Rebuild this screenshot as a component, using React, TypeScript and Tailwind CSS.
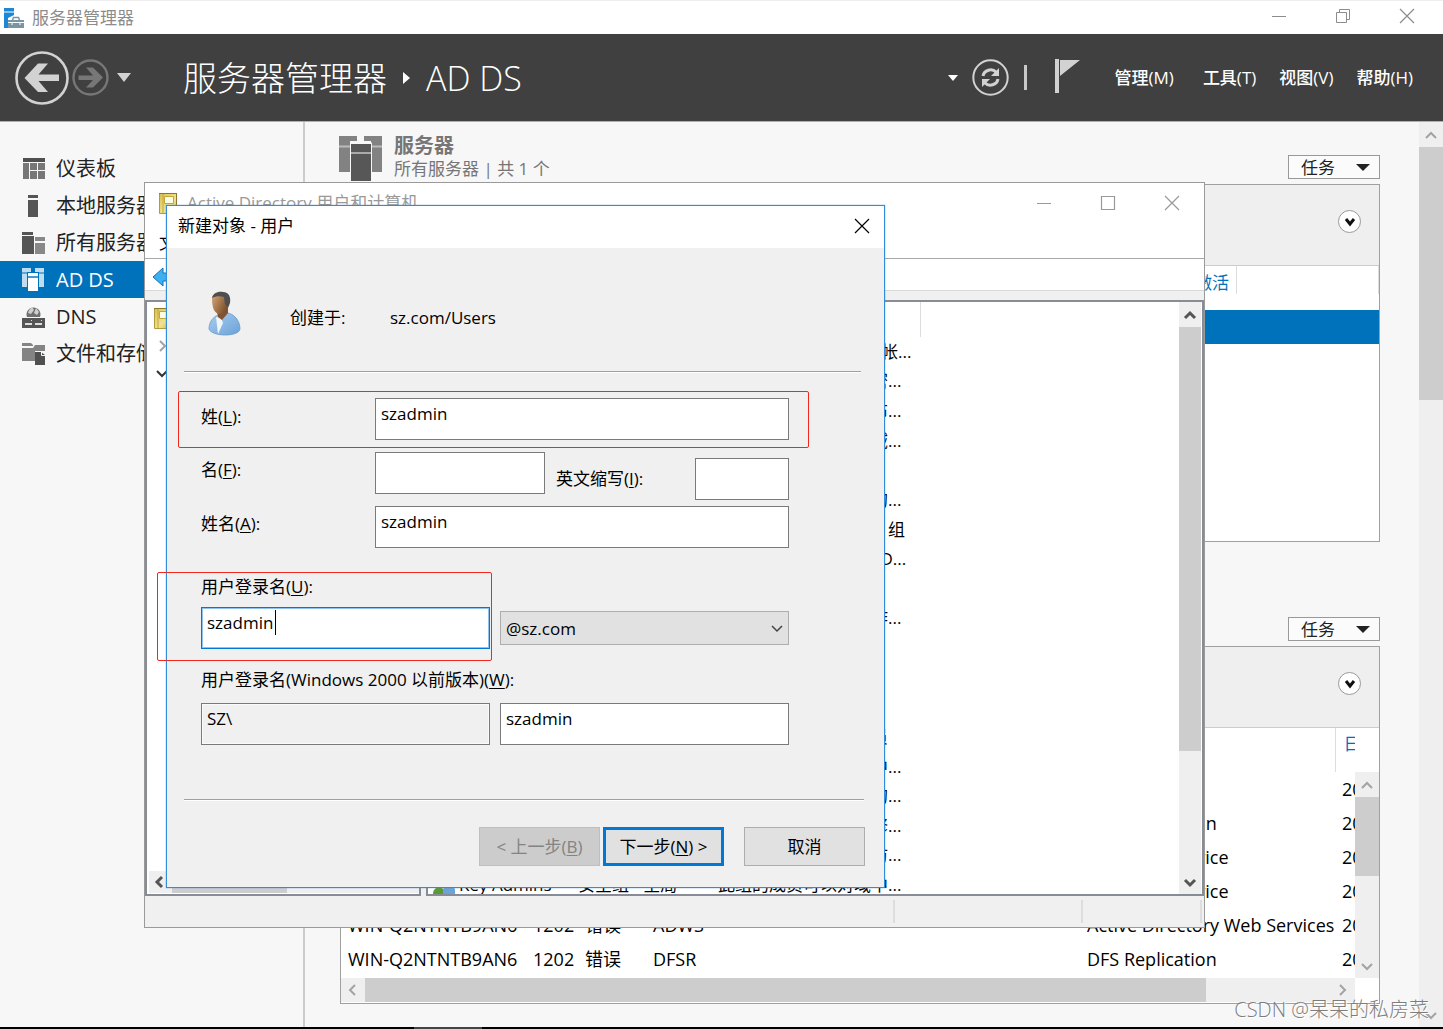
import React from "react";

const events = [
  { server: "", id: "", level: "", log: "", source: "" },
  { server: "", id: "", level: "", log: "", source: "DFS Replication" },
  { server: "", id: "", level: "", log: "", source: "Directory Service" },
  { server: "", id: "", level: "", log: "", source: "Directory Service" },
  { server: "WIN-Q2NTNTB9AN6", id: "1202", level: "错误", log: "ADWS", source: "Active Directory Web Services" },
  { server: "WIN-Q2NTNTB9AN6", id: "1202", level: "错误", log: "DFSR", source: "DFS Replication" },
];

const objects: [string, string, string][] = [
  ["", "", "管理计算机(域)的内置帐..."],
  ["", "", "允许将此组中成员的密..."],
  ["", "", "此组的成员被允许发布..."],
  ["", "", "可以克隆此组中作为域..."],
  ["", "", ""],
  ["", "", "不允许将此组中成员的..."],
  ["", "", "DNS Administrators \u00a0\u00a0组"],
  ["", "", "允许替其他客户端(如 D..."],
  ["", "", ""],
  ["", "", "加入到域中的所有工作..."],
  ["", "", ""],
  ["", "", ""],
  ["", "", ""],
  ["", "", "企业的指定系统管理员"],
  ["", "", "此组的成员可以对林中..."],
  ["", "", "该组的成员是企业中的..."],
  ["", "", "这个组中的成员可以修..."],
  ["", "", "供来宾访问计算机或访..."],
  ["Key Admins", "安全组 - 全局", "此组的成员可以对域中..."],
];

type Dir = "up" | "down" | "left" | "right";
const chevronPath: Record<Dir, string> = {
  up: "M2 9 L7 4 L12 9",
  down: "M2 5 L7 10 L12 5",
  left: "M9 2 L4 7 L9 12",
  right: "M5 2 L10 7 L5 12",
};

function Chevron({ dir, color = "#a3a3a3", width = 2 }: { dir: Dir; color?: string; width?: number }) {
  return (
    <svg width="14" height="14" viewBox="0 0 14 14" fill="none" aria-hidden="true">
      <path d={chevronPath[dir]} stroke={color} strokeWidth={width} />
    </svg>
  );
}

function Triangle({ className, w, h }: { className: string; w: number; h: number }) {
  return (
    <svg className={className} width={w} height={h} viewBox="0 0 10 5" preserveAspectRatio="none" aria-hidden="true">
      <path d="M0 0H10L5 5Z" fill="currentColor" />
    </svg>
  );
}

function CloseIcon() {
  return (
    <svg width="16" height="16" viewBox="0 0 16 16" fill="none" stroke="currentColor" strokeWidth="1.2" aria-hidden="true">
      <path d="M1 1L15 15M15 1L1 15" />
    </svg>
  );
}

function MinIcon() {
  return (
    <svg width="16" height="16" viewBox="0 0 16 16" stroke="currentColor" aria-hidden="true">
      <path d="M1 8.5H15" />
    </svg>
  );
}

function ServerManagerIcon() {
  return (
    <svg width="20" height="20" viewBox="0 0 20 20" aria-hidden="true">
      <path d="M0 0H10V3.500H0Z M0 4.500H10V7L4 10V20H0Z" fill="#1b87d6" />
      <path d="M4 12H20V20H4Z" fill="#7895a8" />
      <path d="M8.500 12L9.500 9.500H14.500L15.500 12" fill="none" stroke="#7895a8" strokeWidth="1.5" />
      <path d="M4 14.500H20M8 14V17M16 14V17" stroke="#fff" fill="none" />
    </svg>
  );
}

function DashboardIcon() {
  return (
    <svg width="24" height="24" viewBox="0 0 24 24" aria-hidden="true">
      <path d="M1 1H23V5H1Z" fill="#505050" />
      <path d="M1 6H7V22H1Z M8 6H15V13H8Z M16 6H23V13H16Z M8 14H15V22H8Z M16 14H23V22H16Z" fill="#777" />
    </svg>
  );
}

function LocalIcon() {
  return (
    <svg width="24" height="24" viewBox="0 0 24 24" aria-hidden="true">
      <path d="M6 1H16V4H6Z M6 6H16V23H6Z" fill="#555" />
    </svg>
  );
}

function AllServersIcon() {
  return (
    <svg width="24" height="24" viewBox="0 0 24 24" aria-hidden="true">
      <path d="M0 1H11V4H0Z M0 5H12V23H0Z" fill="#555" />
      <path d="M13 6H23V10H13Z M13 12H23V23H13Z" fill="#888" />
    </svg>
  );
}

function AdIcon() {
  return (
    <svg width="24" height="24" viewBox="0 0 24 24" aria-hidden="true">
      <path d="M0 0H9V4H5V19H0Z M13 0H22V19H17V4H13Z" fill="#bfdcf0" />
      <path d="M0 5H5M17 5H22" stroke="#0072bc" />
      <path d="M6 5H16V8H6Z M6 10H16V23H6Z" fill="#fff" />
      <path d="M6 9H16" stroke="#8cc0e4" />
    </svg>
  );
}

function DnsIcon() {
  return (
    <svg width="24" height="24" viewBox="0 0 24 24" aria-hidden="true">
      <path d="M5 12A7 7 0 1 1 18 12Z" fill="#707070" />
      <path d="M7 5L10 2L12 5L9 9L6 8ZM14 3L17 7L15 10L12 8Z" fill="#cfcfcf" />
      <path d="M0 13H23V23H0Z" fill="#555" />
      <path d="M3 19H10M13 19H20" stroke="#ddd" strokeWidth="2" />
      <path d="M9 15.500H10M19 15.500H20" stroke="#ddd" />
    </svg>
  );
}

function FilesIcon() {
  return (
    <svg width="24" height="24" viewBox="0 0 24 24" aria-hidden="true">
      <path d="M0 1H9L11 3V4H0Z M0 6H11L13 3H23V9H13V19H0Z" fill="#848484" />
      <path d="M13 10H19L23 13V23H13Z" fill="#505050" />
      <path d="M19.500 10V13.500H23" stroke="#f7f7f7" fill="none" />
    </svg>
  );
}

function ServersIcon() {
  return (
    <svg width="44" height="48" viewBox="0 0 44 48" aria-hidden="true">
      <path d="M0 2H18V7H11V38H0Z M25 2H43V38H32V7H25Z" fill="#828282" />
      <path d="M0 12.500H11M32 12.500H43" stroke="#bbb" strokeWidth="2" />
      <path d="M12 10H32V47H12Z" fill="#575757" />
      <path d="M11 9H33M11.500 9V47M32.500 9V47" stroke="#f7f7f7" />
      <path d="M12 19H32" stroke="#aaa" strokeWidth="2" />
    </svg>
  );
}

function BookIcon() {
  return (
    <svg width="18" height="21" viewBox="0 0 18 21" aria-hidden="true">
      <defs>
        <linearGradient id="cover" x1="0" y1="0" x2="1" y2="1">
          <stop offset="0" stopColor="#d9c04c" />
          <stop offset="0.6" stopColor="#f1e292" />
          <stop offset="1" stopColor="#d0b540" />
        </linearGradient>
      </defs>
      <path d="M0.500 0.500H17.500V20.500H0.500Z" fill="url(#cover)" stroke="#b49a3c" />
      <path d="M0 0.500H18M17.500 0V21" stroke="#8d762a" />
      <path d="M4 1V20" stroke="#c2a740" />
      <path d="M5.500 3.500H14.500V10.500H5.500Z" fill="#fffce4" stroke="#c2a740" />
    </svg>
  );
}

function UserIcon() {
  return (
    <svg width="34" height="46" viewBox="0 0 34 46" aria-hidden="true">
      <defs>
        <linearGradient id="shirt" x1="0" y1="0" x2="1" y2="1">
          <stop offset="0" stopColor="#a9cdf0" />
          <stop offset="1" stopColor="#6aa2d8" />
        </linearGradient>
        <linearGradient id="skin" x1="0" y1="0" x2="1" y2="0.6">
          <stop offset="0" stopColor="#d8a878" />
          <stop offset="1" stopColor="#7a4e2a" />
        </linearGradient>
      </defs>
      <path d="M1 38C1 31 5 26 10 24L20 22C28 24 32 31 32 38C31 46 4 46 1 38Z" fill="url(#shirt)" stroke="#6a9cc8" strokeWidth="0.8" />
      <path d="M8 26L10 43L15 32L13 27Z" fill="#f2f5f8" />
      <path d="M9 20L10 26L14 29L20 22V16Z" fill="#805432" />
      <path d="M4 8C4 4 8 3 12 3C18 3 21 6 20 13C19 20 16 23 11 23C6 22 4 16 4 8Z" fill="url(#skin)" />
      <path d="M4 7C5 2 10 0 15 1C21 1 23 6 22 12L20 17L17 13L16 6C12 5 8 5 4 7Z" fill="#4f4f4f" />
    </svg>
  );
}

function TaskButton() {
  return (
    <button type="button" className="flex h-6 w-[92px] items-center justify-between border border-[#999] bg-[#fbfbfb] pr-[9px] pl-3 text-[17px] leading-none text-[#222]">
      任务
      <Triangle className="text-[#222]" w={14} h={7} />
    </button>
  );
}

function ExpandButton() {
  return (
    <button type="button" aria-label="展开" className="flex size-[23px] items-center justify-center rounded-full border border-[#999] bg-white">
      <svg width="12" height="10" viewBox="0 0 12 10" fill="none" aria-hidden="true">
        <path d="M2 2L6 7L10 2" stroke="#111" strokeWidth="3" />
      </svg>
    </button>
  );
}

function VScroll({ thumb, color, width }: { thumb: string; color: string; width?: number }) {
  return (
    <div className="flex h-full flex-col bg-[#efefef]">
      <div className="flex h-[25px] items-center justify-center pt-0.5">
        <Chevron dir="up" color={color} width={width} />
      </div>
      <div className={thumb} />
      <div className="mt-auto flex h-[25px] items-center justify-center">
        <Chevron dir="down" color={color} width={width} />
      </div>
    </div>
  );
}

const field = "h-[42px] border border-[#7a7a7a] bg-white px-[5px] pb-3 text-[17px] text-black outline-none";

function Key({ children }: { children: React.ReactNode }) {
  return (
    <>
      (<span className="underline underline-offset-2">{children}</span>)
    </>
  );
}

function UserDialog() {
  return (
    <section role="dialog" aria-label="新建对象 - 用户" className="absolute top-[205px] left-[166px] w-[719px] border border-[#2f8ddb] bg-[#f0f0f0] text-[17px] leading-6 text-black shadow-[0_0_1px_#2f8ddb]">
      <div className="flex h-[42px] items-center justify-between bg-white pr-[14px] pb-0.5 pl-[11px]">
        <h2>新建对象 - 用户</h2>
        <button type="button" aria-label="关闭">
          <CloseIcon />
        </button>
      </div>
      <div className="mr-[23px] ml-[17px] flex h-[124px] items-center border-b border-[#a0a0a0] pt-2 pl-6 shadow-[0_1px_0_#fff]">
        <UserIcon />
        <span className="ml-12 w-[100px] pt-2">创建于:</span>
        <span className="pt-2">sz.com/Users</span>
      </div>
      <form className="pr-[95px] pl-[34px]" onSubmit={(e) => e.preventDefault()}>
        <div className="flex flex-col gap-3 pt-[26px]">
          <div className="relative flex items-center">
            <label htmlFor="last" className="w-[174px] pb-1">
              姓<Key>L</Key>:
            </label>
            <input id="last" className={field + " flex-1"} defaultValue="szadmin" />
            <div className="pointer-events-none absolute -top-[7px] -right-5 -bottom-2 -left-[23px] rounded-xs border border-[#f0281e]" />
          </div>
          <div className="flex items-center">
            <label htmlFor="first" className="w-[174px] pb-1.5">
              名<Key>F</Key>:
            </label>
            <input id="first" className={field + " w-[170px]"} />
            <label htmlFor="initials" className="ml-[11px] flex-1 pt-3">
              英文缩写<Key>I</Key>:
            </label>
            <input id="initials" className={field + " mt-1.5 -mb-1.5 w-[94px]"} />
          </div>
          <div className="flex items-center">
            <label htmlFor="full" className="w-[174px] pb-1.5">
              姓名<Key>A</Key>:
            </label>
            <input id="full" className={field + " flex-1"} defaultValue="szadmin" />
          </div>
        </div>
        <div className="relative mt-[27px]">
          <label htmlFor="logon" className="block pb-2">
            用户登录名<Key>U</Key>:
          </label>
          <div className="grid grid-cols-2 items-center gap-[10px]">
            <div className="relative flex">
              <input id="logon" className="h-[42px] w-full border border-[#0078d7] bg-white px-[5px] pb-3 text-[17px] text-black shadow-[inset_0_0_0_1px_#8fc3ee] outline-none" defaultValue="szadmin" />
              <span className="absolute top-[3px] left-[74px] h-[25px] w-px bg-black" />
            </div>
            <div className="relative flex">
              <select aria-label="域后缀" className="h-[34px] w-full appearance-none border border-[#adadad] bg-[#e1e1e1] px-[5px] text-[17px] leading-none text-black">
                <option>@sz.com</option>
              </select>
              <span className="pointer-events-none absolute top-[10px] right-[5px]">
                <Chevron dir="down" color="#444" width={1.5} />
              </span>
            </div>
          </div>
          <div className="pointer-events-none absolute -top-[3px] -bottom-3 -left-[44px] w-[335px] rounded-xs border border-[#f0281e]" />
        </div>
        <label htmlFor="legacy" className="mt-[19px] block pb-[11px]">
          用户登录名(Windows 2000 以前版本)<Key>W</Key>:
        </label>
        <div className="grid grid-cols-2 gap-[10px]">
          <input aria-label="域名" readOnly className="h-[42px] min-w-0 border border-[#7a7a7a] bg-[#f0f0f0] px-[5px] pb-3 text-[17px] text-black shadow-[inset_0_0_0_1px_#fafafa] outline-none" defaultValue="SZ\" />
          <input id="legacy" className={field + " min-w-0"} defaultValue="szadmin" />
        </div>
      </form>
      <div className="mt-[54px] mr-5 ml-[17px] border-b border-[#a0a0a0] shadow-[0_1px_0_#fff]" />
      <div className="mt-[27px] mr-[19px] mb-[21px] flex justify-end">
        <button type="button" disabled className="h-[39px] w-[121px] border border-[#bfbfbf] bg-[#ccc] text-[#838383]">
          &lt; 上一步<Key>B</Key>
        </button>
        <button type="button" className="ml-[3px] h-[39px] w-[121px] border-3 border-[#0078d7] bg-[#e1e1e1]">
          下一步<Key>N</Key> &gt;
        </button>
        <button type="button" className="ml-5 h-[39px] w-[121px] border border-[#adadad] bg-[#e1e1e1]">
          取消
        </button>
      </div>
    </section>
  );
}

function DirectoryWindow() {
  return (
    <section aria-label="Active Directory 用户和计算机" className="absolute top-[182px] left-[144px] flex h-[746px] w-[1061px] flex-col border border-[#9a9a9a] bg-[#f0f0f0] text-[17px] leading-6 text-black">
      <div className="flex h-[76px] flex-col border-b border-[#a8a8a8] bg-white">
        <div className="flex h-10 items-center pr-6 pl-[14px] text-[#999]">
          <BookIcon />
          <h2 className="ml-[10px] flex-1">Active Directory 用户和计算机</h2>
          <div className="flex gap-12">
            <button type="button" aria-label="最小化">
              <MinIcon />
            </button>
            <button type="button" aria-label="最大化">
              <svg width="16" height="16" viewBox="0 0 16 16" fill="none" stroke="currentColor" strokeWidth="1.2">
                <path d="M1.500 1.500H14.500V14.500H1.500Z" />
              </svg>
            </button>
            <button type="button" aria-label="关闭">
              <CloseIcon />
            </button>
          </div>
        </div>
        <nav className="pt-2 pl-[14px]">文件(F)</nav>
      </div>
      <div className="flex h-8 items-center border-b border-[#d9d9d9] bg-white pt-1 pl-[7px]">
        <svg width="26" height="20" viewBox="0 0 26 20" aria-label="后退">
          <path d="M1 10L11 1V6H25V14H11V19Z" fill="#3cb0f0" stroke="#1a6fae" />
        </svg>
      </div>
      <div className="mt-[9px] flex min-h-0 flex-1 gap-[5px]">
        <div className="flex w-[276px] flex-col border-2 border-[#878c96] bg-white pl-0.5">
          <ul className="flex-1 overflow-hidden pt-[3px]">
            <li className="flex h-[27px] items-center pl-[5px]">
              <BookIcon />
            </li>
            <li className="flex h-[27px] items-center pl-1.5">
              <Chevron dir="right" />
            </li>
            <li className="flex h-[27px] items-center pl-1.5">
              <Chevron dir="down" color="#333" />
            </li>
          </ul>
          <div className="mb-px flex h-[22px] items-center bg-[#efefef] pl-1">
            <Chevron dir="left" color="#555" width={3} />
            <div className="ml-[5px] h-full w-[115px] bg-[#cdcdcd]" />
          </div>
        </div>
        <div className="flex min-w-0 flex-1 border-2 border-[#878c96] bg-white">
          <div className="h-full min-w-0 flex-1 overflow-hidden">
            <div className="h-[35px] w-[493px] border-r border-[#ddd]" />
            <table className="h-[563px] table-fixed border-collapse text-left leading-[26px] whitespace-nowrap">
              <colgroup>
                <col className="w-[150px]" />
                <col className="w-[140px]" />
                <col className="w-[203px]" />
              </colgroup>
              <tbody>
                {objects.map(([name, type, desc], i) => (
                  <tr key={i}>
                    <td className="p-0 pl-[5px]">
                      <div className="flex h-[26px] items-center gap-[3px]">
                        <svg width="23" height="20" viewBox="0 0 23 20" aria-hidden="true">
                          <circle cx="7" cy="6" r="4" fill="#a0714a" />
                          <circle cx="15" cy="6" r="4" fill="#a0714a" />
                          <path d="M0 19C0 10 12 10 12 19Z" fill="#5d9a35" />
                          <path d="M10 20V15C10 10 22 10 22 15V20Z" fill="#6fa3d8" />
                        </svg>
                        {name}
                      </div>
                    </td>
                    <td className="p-0">{type}</td>
                    <td className="p-0">{desc}</td>
                  </tr>
                ))}
              </tbody>
            </table>
          </div>
          <div className="mr-px w-[22px]">
            <VScroll thumb="h-[424px] bg-[#cdcdcd]" color="#555" width={3} />
          </div>
        </div>
      </div>
      <div className="flex h-[31px] justify-end py-1 pr-0.5">
        <div className="w-[188px] border-l-2 border-[#ddd]" />
        <div className="w-[121px] border-x-2 border-[#ddd]" />
      </div>
    </section>
  );
}

const nav = [
  { label: "仪表板", icon: <DashboardIcon /> },
  { label: "本地服务器", icon: <LocalIcon /> },
  { label: "所有服务器", icon: <AllServersIcon /> },
  { label: "AD DS", icon: <AdIcon />, active: true },
  { label: "DNS", icon: <DnsIcon /> },
  { label: "文件和存储服务", icon: <FilesIcon /> },
];

export default function App() {
  return (
    <div className="relative flex min-h-screen flex-col overflow-hidden bg-[#f7f7f7] font-['Open_Sans','Noto_Sans_CJK_SC',sans-serif] text-[#222]">
      <div className="flex h-[34px] items-center justify-between border-t border-[#eee] bg-white pr-7 pl-1 text-[#8c8c8c]">
        <div className="flex items-center gap-2 text-[17px] leading-none">
          <ServerManagerIcon />
          <span>服务器管理器</span>
        </div>
        <div className="flex gap-12 pb-1">
          <button type="button" aria-label="最小化">
            <MinIcon />
          </button>
          <button type="button" aria-label="还原">
            <svg width="16" height="16" viewBox="0 0 16 16" fill="none" stroke="currentColor">
              <path d="M1.500 4.500H11.500V14.500H1.500Z M4.500 4.500V1.500H14.500V11.500H11.500" />
            </svg>
          </button>
          <button type="button" aria-label="关闭">
            <CloseIcon />
          </button>
        </div>
      </div>

      <header className="flex h-[88px] items-center border-b border-[#b0b0b0] bg-[#404040] pr-[30px] pl-[15px] text-white">
        <button type="button" aria-label="后退">
          <svg width="54" height="54" viewBox="0 0 54 54" fill="none">
            <circle cx="27" cy="27" r="25.500" stroke="#d2d2d2" strokeWidth="2.600" />
            <path d="M23 12.500H33L23.500 23.500H44V30H23.500L33 41H23L9.500 27Z" fill="#d2d2d2" />
          </svg>
        </button>
        <button type="button" aria-label="前进" className="ml-[3px]">
          <svg width="37" height="37" viewBox="0 0 37 37" fill="none">
            <circle cx="18.500" cy="18.500" r="17" stroke="#777" strokeWidth="2.400" />
            <path d="M21 8.500H14L21 16.500H6.500V21H21L14 28.500H21L31 18.500Z" fill="#777" />
          </svg>
        </button>
        <Triangle className="ml-2 text-[#d2d2d2]" w={14} h={9} />
        <h1 className="ml-[52px] flex items-center text-[34px] leading-none font-light">
          服务器管理器
          <svg className="mx-4" width="7" height="12" viewBox="0 0 7 12">
            <path d="M0 0L7 6L0 12Z" fill="#fff" />
          </svg>
          AD DS
        </h1>
        <div className="ml-auto flex items-center">
          <Triangle className="text-white" w={10} h={6} />
          <button type="button" aria-label="刷新" className="ml-[14px]">
            <svg width="37" height="37" viewBox="0 0 37 37" fill="none">
              <circle cx="18.500" cy="18.500" r="17.200" stroke="#d2d2d2" strokeWidth="2" />
              <path d="M11 17C12 11 20 9 24 13M26 20C25 26 17 28 13 24" stroke="#d2d2d2" strokeWidth="3" />
              <path d="M27 9V17H19Z M10 28V20H18Z" fill="#d2d2d2" />
            </svg>
          </button>
          <span className="ml-[15px] h-[25px] w-[3px] bg-[#c8c8c8]" />
          <svg className="mb-1 ml-7" width="26" height="34" viewBox="0 0 26 34" aria-label="通知">
            <path d="M0 0H4V34H0Z M5 1H25L5 17Z" fill="#d2d2d2" />
          </svg>
        </div>
        <nav className="ml-[34px] flex gap-[23px] text-[17px] leading-none font-medium">
          <button type="button">管理(M)</button>
          <button type="button" className="ml-1.5">工具(T)</button>
          <button type="button">视图(V)</button>
          <button type="button">帮助(H)</button>
        </nav>
      </header>

      <div className="flex flex-1">
        <aside className="w-[305px] border-r-2 border-[#ccc] pt-7">
          {nav.map((n) => (
            <a
              key={n.label}
              href="#"
              className={
                n.active
                  ? "flex h-[37px] items-center gap-[10px] bg-[#0072bc] pl-[22px] text-[20px] leading-none text-white"
                  : "flex h-[37px] items-center gap-[10px] pl-[22px] text-[20px] leading-none"
              }
            >
              {n.icon}
              {n.label}
            </a>
          ))}
        </aside>

        <main className="min-w-0 flex-1 pr-[39px] pb-[23px] pl-[35px]">
          <section>
            <div className="flex h-[62px] items-start justify-between">
              <div className="-ml-px flex gap-[11px] pt-3 text-[#767676]">
                <ServersIcon />
                <div className="text-[17px] leading-[22px]">
                  <h2 className="text-[20px] leading-6 font-bold">服务器</h2>
                  <p>所有服务器 | 共 1 个</p>
                </div>
              </div>
              <div className="mt-[33px]">
                <TaskButton />
              </div>
            </div>
            <div className="h-[358px] border border-[#a0a0a0] bg-white">
              <div className="flex h-[81px] items-start justify-end border-b border-[#ccc] bg-[#efefef] pt-[25px] pr-[18px]">
                <ExpandButton />
              </div>
              <div className="flex h-11 items-start justify-end text-[17px] text-[#0072bc]">
                <span className="h-7 border-r border-[#ddd] pt-1 pr-[7px]">激活</span>
                <span className="h-7 w-[142px] border-r border-[#ddd]" />
              </div>
              <div className="h-[34px] bg-[#0072bc]" />
            </div>
          </section>

          <section className="pt-[75px]">
            <div className="flex h-[29px] justify-end">
              <TaskButton />
            </div>
            <div className="border border-[#a0a0a0] bg-white">
              <div className="flex h-[81px] items-start justify-end border-b border-[#ccc] bg-[#efefef] pt-[25px] pr-[18px]">
                <ExpandButton />
              </div>
              <div className="flex">
                <div className="h-[250px] min-w-0 flex-1 overflow-hidden">
                  <table className="w-full table-fixed border-collapse text-left text-[18px] leading-6 whitespace-nowrap text-black">
                    <colgroup>
                      <col className="w-[192px]" />
                      <col className="w-[52px]" />
                      <col className="w-[68px]" />
                      <col className="w-[434px]" />
                      <col />
                      <col className="w-[20px]" />
                    </colgroup>
                    <thead>
                      <tr className="h-11 align-top text-[17px] text-[#0072bc]">
                        <th colSpan={5} className="p-0" />
                        <th className="overflow-hidden border-l border-[#ddd] p-0 pt-1 pl-2 font-normal">日</th>
                      </tr>
                    </thead>
                    <tbody>
                      {events.map((r, i) => (
                        <tr key={i} className="h-[34px]">
                          <td className="p-0 pl-[7px]">{r.server}</td>
                          <td className="p-0">{r.id}</td>
                          <td className="p-0">{r.level}</td>
                          <td className="p-0">{r.log}</td>
                          <td className="p-0">{r.source}</td>
                          <td className="overflow-hidden p-0 pl-[7px]">20</td>
                        </tr>
                      ))}
                    </tbody>
                  </table>
                </div>
                <div className="w-6 pt-11">
                  <VScroll thumb="h-[79px] bg-[#cdcdcd]" color="#a3a3a3" />
                </div>
              </div>
              <div className="mr-6 mb-px flex h-6 items-center bg-[#efefef]">
                <span className="flex w-6 justify-center">
                  <Chevron dir="left" />
                </span>
                <div className="h-full w-[841px] bg-[#cdcdcd]" />
                <span className="mr-1.5 ml-auto">
                  <Chevron dir="right" />
                </span>
              </div>
            </div>
          </section>
        </main>

        <div className="w-6">
          <VScroll thumb="h-[253px] bg-[#cdcdcd]" color="#a3a3a3" />
        </div>
      </div>
      <div className="flex h-0.5 bg-black">
        <span className="ml-[414px] w-[68px] bg-[#444]" />
      </div>

      <DirectoryWindow />
      <UserDialog />
      <p className="absolute right-[14px] bottom-[7px] text-[20px] leading-6 font-light text-[#7d7d7d] [text-shadow:1px_1px_0_#fff]">CSDN @呆呆的私房菜</p>
    </div>
  );
}
